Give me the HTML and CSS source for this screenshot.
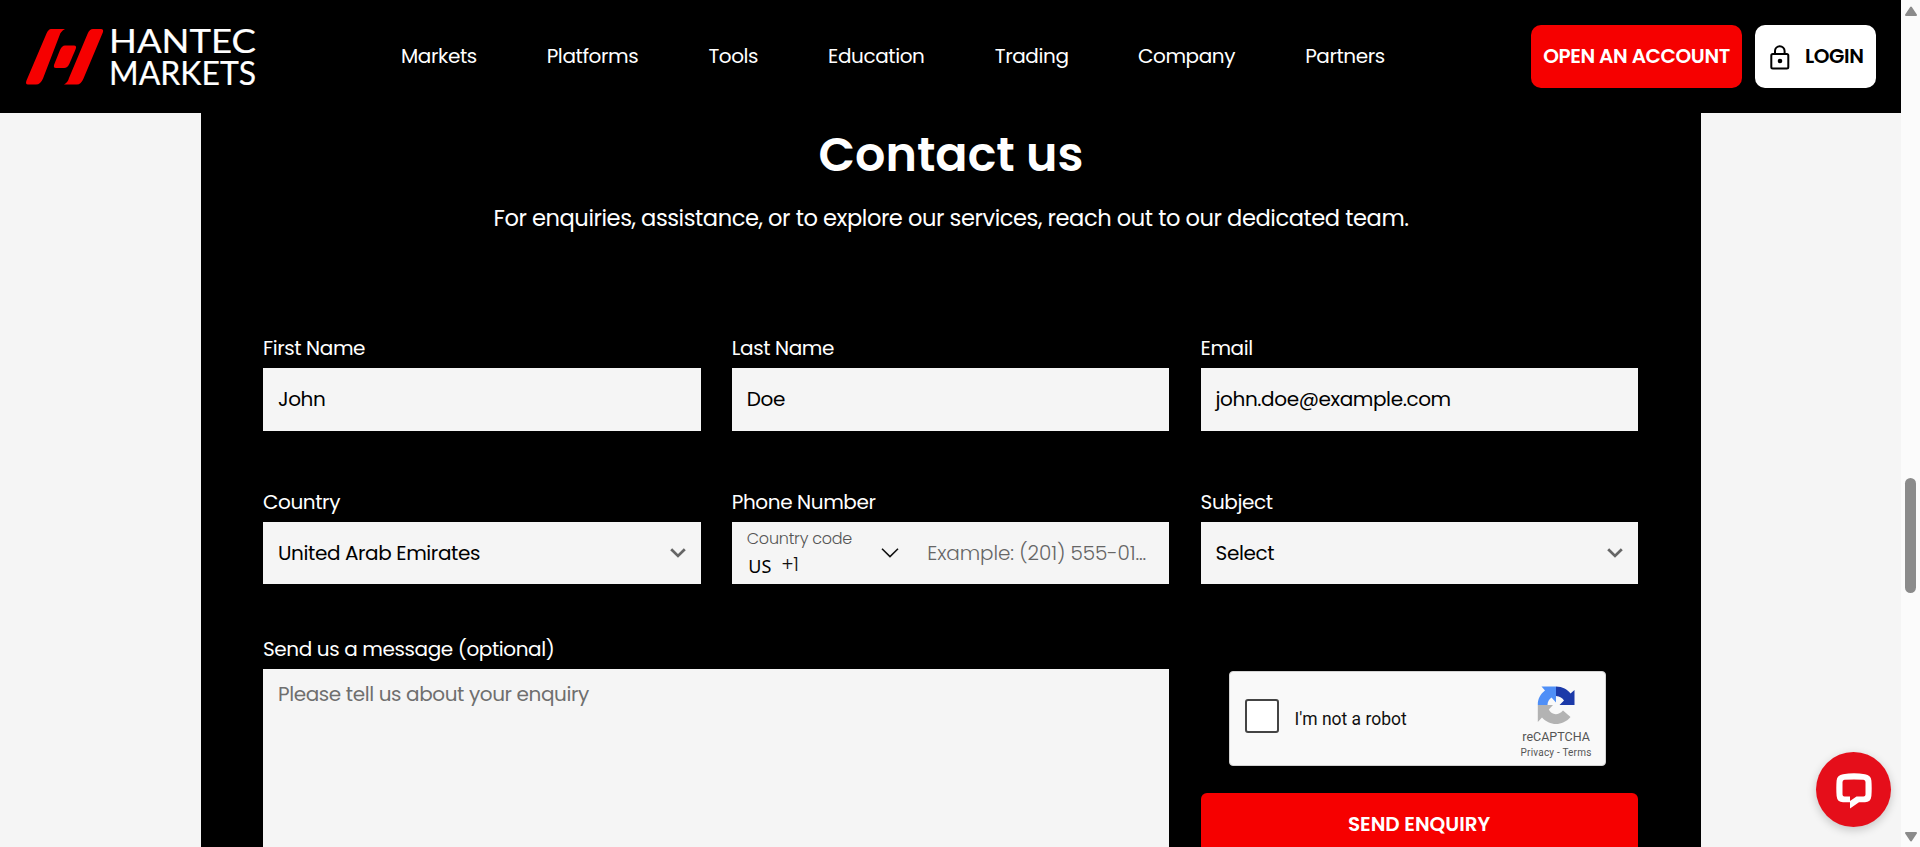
FILE: index.html
```html
<!DOCTYPE html>
<html lang="en">
<head>
<meta charset="utf-8">
<title>Hantec Markets - Contact us</title>
<link rel="stylesheet" href="styles.css">
</head>
<body>
<div class="page">
  <header class="header">
    <a class="logo" aria-label="Hantec Markets">
      <svg width="234" height="81" viewBox="25 15.500 234 81">
        <g fill="#f60000">
          <path d="M51 28.5H65Q60.5 31 59.5 35L43 78Q40.5 84 36 84H28Q25 84 26.5 80L46.500 33Q48.500 28.500 51 28.500Z"/>
          <path d="M93 28.5H101Q104 28.500 102.800 32L83.500 78Q81 84 77 84H64Q68 81.500 69 77.500L87.500 33.500Q89.500 28.500 93 28.500Z"/>
          <path d="M65 45H74Q77 45 75.700 48.500L69.500 63Q67.500 67.500 64 67.500H56Q53 67.500 54.200 64L60 49.500Q62 45 65 45Z"/>
        </g>
        <text class="logo-text" x="109" y="52.300" textLength="147" lengthAdjust="spacingAndGlyphs">HANTEC</text>
        <text class="logo-text" x="109" y="84.300" textLength="147" lengthAdjust="spacingAndGlyphs">MARKETS</text>
      </svg>
    </a>
    <nav class="nav">
      <a class="w-markets">Markets</a><a class="w-platforms">Platforms</a><a class="w-tools">Tools</a><a class="w-education">Education</a><a class="w-trading">Trading</a><a class="w-company">Company</a><a class="w-partners">Partners</a>
    </nav>
    <div class="actions">
      <a class="btn btn-open">OPEN AN ACCOUNT</a>
      <a class="btn btn-login">
        <svg width="20" height="25" viewBox="0 0 20 25" fill="none" stroke="#000" stroke-width="2"><rect x="1.300" y="9" width="17" height="14.500" rx="1.500"/><path d="M5 9V6a4.800 4.800 0 0 1 9.600 0V9"/><circle cx="10" cy="16" r="2.300" fill="#000" stroke="none"/></svg>
        <span>LOGIN</span>
      </a>
    </div>
  </header>

  <main class="panel">
    <h1 class="title">Contact us</h1>
    <p class="subtitle">For enquiries, assistance, or to explore our services, reach out to our dedicated team.</p>
    <form class="form">
      <div class="cell"><label class="label">First Name</label><div class="field tall"><span>John</span></div></div>
      <div class="cell"><label class="label">Last Name</label><div class="field tall"><span>Doe</span></div></div>
      <div class="cell"><label class="label">Email</label><div class="field tall"><span>john.doe@example.com</span></div></div>

      <div class="cell"><label class="label">Country</label>
        <div class="field select"><span>United Arab Emirates</span><svg width="16" height="10" viewBox="0 0 16 10" fill="none" stroke="#666" stroke-width="2.800"><path d="M1.200 1.300L8 7.900L14.800 1.300"/></svg></div></div>
      <div class="cell"><label class="label">Phone Number</label>
        <div class="field phone">
          <div class="code"><span class="code-label">Country code</span><div class="code-value"><span class="iso">US</span><span class="dial">+1</span></div></div>
          <svg width="18" height="10" viewBox="0 0 18 10" fill="none" stroke="#111" stroke-width="1.600"><path d="M1 .8L9 8.600L17 .8"/></svg>
          <span class="phone-hint">Example: (201) 555-01...</span>
        </div></div>
      <div class="cell"><label class="label">Subject</label>
        <div class="field select"><span>Select</span><svg width="16" height="10" viewBox="0 0 16 10" fill="none" stroke="#666" stroke-width="2.800"><path d="M1.200 1.300L8 7.900L14.800 1.300"/></svg></div></div>

      <div class="cell wide"><label class="label">Send us a message (optional)</label><textarea class="message" placeholder="Please tell us about your enquiry"></textarea></div>
      <div class="cell submit">
        <div class="captcha">
          <span class="checkbox"></span>
          <span class="robot">I'm not a robot</span>
          <div class="brand">
            <svg width="38" height="39" viewBox="0 0 38 39">
              <path fill="#1c3aa9" d="M19 .5C25.500 .5 30.500 3.500 33.500 7.500L37.500 4V19H22.500L27 14.500C25.500 12 23 10.300 19 10Z"/>
              <path fill="#4f8ff7" d="M19 .5H4.500L8 4.500C3 8.500 .8 13 .8 19H10.500C10.500 15.700 12 13.500 14.500 11.500L19 16.500Z"/>
              <path fill="#b3b3b3" d="M.8 19H16L11.800 23.500C14.500 29 21 30 26 24.500L33.500 31C25 41 12 39.500 5 31.500L.8 36Z"/>
            </svg>
            <span class="brand-name">reCAPTCHA</span>
            <span class="brand-links">Privacy - Terms</span>
          </div>
        </div>
        <button class="send" type="button">SEND ENQUIRY</button>
      </div>
    </form>
  </main>
</div>

<aside class="scrollbar">
  <svg width="12" height="10" viewBox="0 0 12 10"><path fill="#8b8b8b" stroke="#8b8b8b" stroke-linejoin="round" stroke-width="2" d="M6 1.500L11 9H1Z"/></svg>
  <div class="thumb"></div>
  <svg class="down" width="12" height="10" viewBox="0 0 12 10"><path fill="#8b8b8b" stroke="#8b8b8b" stroke-linejoin="round" stroke-width="2" d="M6 8.500L11 1H1Z"/></svg>
</aside>

<div class="chat">
  <svg width="36" height="36" viewBox="0 0 36 36"><path fill="#fff" fill-rule="evenodd" d="M7 1.200Q18 -.6 29 1.200Q34.800 2 35.400 7.500Q36 15 35.400 23Q34.800 29.200 29 29.300H23L14 35.500V29.300H7Q1.200 29.200 .6 23Q0 15 .6 7.500Q1.200 2 7 1.200ZM8.500 6.800Q6.500 7 6.500 9V21.500Q6.500 23.500 8.500 23.500H14V28L20.500 23.500H27.500Q29.500 23.500 29.500 21.500V9Q29.500 7 27.500 6.800Q18 6 8.500 6.800Z"/></svg>
</div>
</body>
</html>
```
FILE: styles.css
```css
* { box-sizing: border-box; }
body {
  margin: 0;
  width: 1920px;
  height: 847px;
  overflow: hidden;
  display: flex;
  background: #f5f5f5;
  font-family: Poppins, Inter, sans-serif;
  font-size: 20px;
  letter-spacing: -0.4px;
  color: #000;
}
.page { width: 1901px; height: 847px; overflow: hidden; flex: none; }
.header { display: flex; align-items: center; height: 113px; background: #000; }
.logo { display: flex; margin-left: 25px; width: 232px; flex: none; }
.logo svg { flex: none; overflow: visible; letter-spacing: 0; }
.logo-text { font-family: Lato, sans-serif; font-size: 33px; fill: #fff; stroke: #fff; stroke-width: .2px; }
.nav { display: flex; margin-left: 144px; width: 1000px; gap: 70.2px; padding-bottom: 2px; color: #fff; white-space: nowrap; line-height: 30px; flex: none; }
.nav a { flex: none; }
.w-markets { width: 75.5px; }
.w-platforms { width: 91.5px; }
.w-tools { width: 49.5px; }
.w-education { width: 96.5px; }
.w-trading { width: 73px; }
.w-company { width: 97px; }
.w-partners { width: 80px; }
.actions { display: flex; gap: 13px; margin-left: 130px; }
.btn { display: flex; align-items: center; justify-content: center; height: 63px; padding-bottom: 2px; border-radius: 10px; font-weight: 600; white-space: nowrap; }
.btn-open { width: 211px; background: #f60000; color: #fff; }
.btn-login { width: 121px; padding-left: 2px; background: #fff; gap: 15.5px; }
.btn-login svg { margin-top: 3px; }

.panel { width: 1500px; height: 734px; margin: 0 auto 0 201px; padding: 6px 62px 0; background: #000; color: #fff; }
.title { margin: 0; font-size: 47.6px; font-weight: 600; line-height: 72px; letter-spacing: 0; text-align: center; }
.subtitle { margin: 9px 0 0; font-size: 22.6px; line-height: 36px; letter-spacing: -0.45px; text-align: center; white-space: nowrap; }
.form { display: grid; grid-template-columns: repeat(3, 437.6px); column-gap: 31.2px; grid-template-rows: 154px 147px 222px; margin-top: 97px; }
.label { display: block; height: 30px; line-height: 30px; margin-bottom: 5px; white-space: nowrap; }
.wide { grid-column: span 2; }
.field { display: flex; align-items: center; height: 62px; padding: 0 15px; background: #f5f5f5; color: #000; white-space: nowrap; }
.tall { height: 63px; padding-bottom: 2px; }
.select { justify-content: space-between; }
.phone { padding-right: 0; }
.code { width: 134.5px; }
.code-label { display: block; font-size: 16px; font-weight: 300; line-height: 20px; letter-spacing: -0.25px; color: #555; margin-top: 1px; }
.code-value { display: flex; align-items: center; gap: 10px; height: 30px; padding-left: 1.5px; }
.iso { font: 18px "Noto Sans", sans-serif; letter-spacing: 0; padding-top: 5px; }
.dial { font-size: 19px; font-weight: 300; color: #111; padding-top: 1px; }
.phone-hint { margin-left: 28px; letter-spacing: -0.1px; color: #666; font-weight: 300; }
.message { display: block; width: 100%; height: 187px; padding: 10px 15px; border: 0; outline: 0; background: #f5f5f5; font: inherit; line-height: 30px; letter-spacing: -0.4px; }
.message::placeholder { color: #6f6f6f; }
.submit { padding-top: 37px; }
.captcha { display: flex; align-items: center; width: 377px; height: 95px; margin-left: 28px; padding-left: 15px; border: 1px solid #d3d3d3; border-radius: 4px; background: #f9f9f9; color: #111; font-family: Roboto, sans-serif; letter-spacing: 0; }
.checkbox { width: 34px; height: 34px; border: 2px solid #444; border-radius: 3px; background: #fff; margin-top: -5px; flex: none; }
.robot { margin-left: 16px; width: 207.5px; font-size: 17.5px; line-height: 24px; flex: none; }
.brand { display: flex; flex-direction: column; align-items: center; width: 108px; height: 93px; padding-top: 14px; color: #555; flex: none; }
.brand-name { margin-top: 3px; font-size: 12.5px; line-height: 18px; }
.brand-links { font-size: 10px; line-height: 14px; letter-spacing: .2px; }
.send { display: flex; align-items: center; justify-content: center; width: 437px; height: 63px; margin: 27px 0 0; padding: 0 0 2px; border: 0; border-radius: 6px; background: #f60000; color: #fff; font: 600 20px/30px Poppins, Inter, sans-serif; letter-spacing: -0.05px; }

.scrollbar { display: flex; flex-direction: column; align-items: center; width: 19px; height: 847px; padding: 6px 0 5px; background: #fbfbfb; }
.thumb { width: 11px; height: 115px; margin-top: 462px; border-radius: 6px; background: #8b8b8b; }
.down { margin-top: auto; }
.chat { position: fixed; left: 1816px; top: 752px; display: flex; align-items: center; justify-content: center; width: 75px; height: 75px; padding-top: 3px; border-radius: 50%; background: #e50e1a; box-shadow: 0 3px 10px rgba(0, 0, 0, .2); }
```
